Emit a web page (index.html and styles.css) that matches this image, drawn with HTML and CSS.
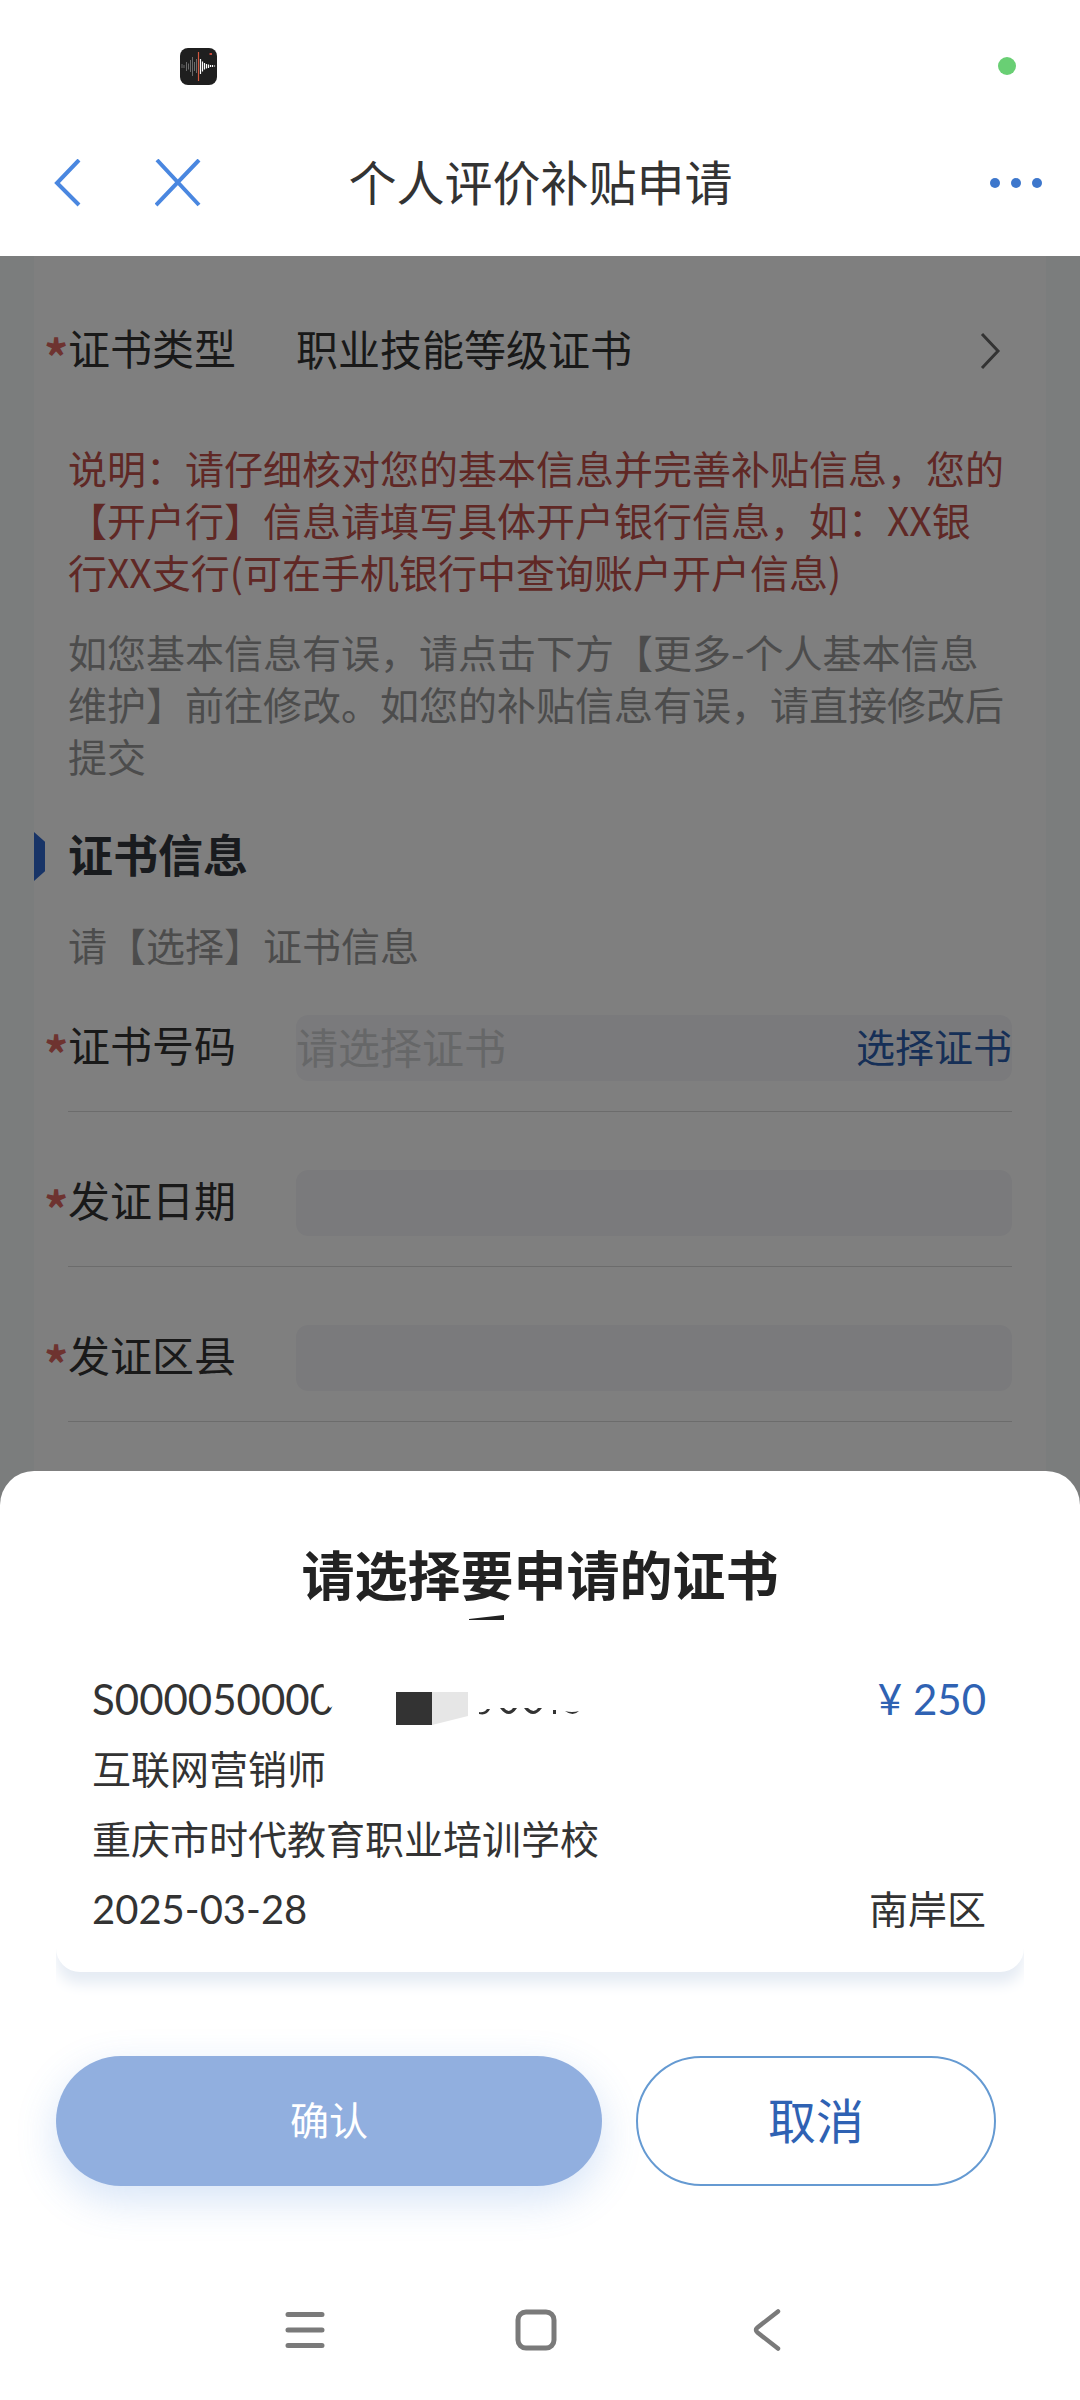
FILE: index.html
```html
<!DOCTYPE html>
<html lang="zh-CN">
<head>
<meta charset="utf-8">
<meta name="viewport" content="width=device-width, initial-scale=1">
<title>个人评价补贴申请</title>
<link rel="stylesheet" href="styles.css">
</head>
<body>
<div class="screen">
  <div class="status-bar">
    <svg class="app-badge" viewBox="0 0 37 37" aria-hidden="true">
      <rect width="37" height="37" rx="8" fill="#1f1f1f"/>
      <g stroke="#6a6a6a" stroke-width="1"><path d="M2 16v4M4 17v3M6.500 14v9M8.500 15.500v6M10.500 12v12M12.500 9v19M14.500 14v9M16.500 11v14"/></g>
      <path d="M18.500 4v29" stroke="#d2583f" stroke-width="1.200"/>
      <path d="M20.500 11v15M22.500 13.500v10M24.500 15v6.500M26.500 16v4.500M28.500 16.500v3.500M30.500 17v2M32.500 17v2M34.500 17.500v1" stroke="#fff" stroke-width="1.200"/>
      <rect x="29.500" y="5" width="2.500" height="2" fill="#c4473c"/>
    </svg>
    <span class="privacy-dot"></span>
  </div>

  <header class="nav-bar">
    <div class="nav-actions">
      <button class="icon-button" type="button" aria-label="返回">
        <svg width="28" height="48" viewBox="0 0 28 48"><path d="M25 1 3 24l22 22" fill="none" stroke="#4a87e0" stroke-width="4"/></svg>
      </button>
      <button class="icon-button" type="button" aria-label="关闭">
        <svg width="46" height="48" viewBox="0 0 46 48"><path d="M2 1l42 45M44 1 1 46" fill="none" stroke="#4a87e0" stroke-width="4"/></svg>
      </button>
    </div>
    <h1 class="nav-title">个人评价补贴申请</h1>
    <button class="icon-button nav-more" type="button" aria-label="更多">
      <svg width="54" height="12" viewBox="0 0 54 12" fill="#3d77cc"><circle cx="6" cy="6" r="5"/><circle cx="27" cy="6" r="5"/><circle cx="48" cy="6" r="5"/></svg>
    </button>
  </header>

  <main class="stage">
    <form class="page">
      <div class="panel">
        <div class="row row-type">
          <span class="label"><span class="star">*</span>证书类型</span>
          <span class="value">职业技能等级证书</span>
          <svg width="22" height="38" viewBox="0 0 22 38" aria-hidden="true"><path d="M2 2l16 17L2 36" fill="none" stroke="#666" stroke-width="3"/></svg>
        </div>
        <p class="note note-alert">说明：请仔细核对您的基本信息并完善补贴信息，您的【开户行】信息请填写具体开户银行信息，如：XX银行XX支行(可在手机银行中查询账户开户信息)</p>
        <p class="note">如您基本信息有误，请点击下方【更多-个人基本信息维护】前往修改。如您的补贴信息有误，请直接修改后提交</p>
        <h2 class="section-title">证书信息</h2>
        <p class="hint">请【选择】证书信息</p>
        <div class="fields">
          <div class="row row-line">
            <label class="label" for="cert-no"><span class="star">*</span>证书号码</label>
            <div class="field"><input id="cert-no" type="text" placeholder="请选择证书" readonly><a class="pick" href="#sheet">选择证书</a></div>
          </div>
          <div class="row row-line">
            <label class="label" for="cert-date"><span class="star">*</span>发证日期</label>
            <div class="field"><input id="cert-date" type="text" readonly></div>
          </div>
          <div class="row row-line">
            <label class="label" for="cert-area"><span class="star">*</span>发证区县</label>
            <div class="field"><input id="cert-area" type="text" readonly></div>
          </div>
        </div>
      </div>
    </form>

    <div class="overlay">
      <section class="sheet" id="sheet">
        <h2 class="sheet-title">请选择要申请的证书
          <svg class="stroke-mark" viewBox="0 0 36 5" aria-hidden="true"><path d="M0 5v-1L35 0v5z" fill="#222"/></svg>
        </h2>
        <div class="cert-list">
          <article class="cert">
            <div class="cert-row">
              <span class="number">S000050000
                <svg class="redaction" viewBox="0 0 300 50" aria-hidden="true">
                  <path d="M33 0l1 8q-1 14 6 20l6-4 0 26h30V0z" fill="#fff"/>
                  <rect x="106" y="12" width="36" height="33" fill="#333"/>
                  <path d="M142 12h36v24l-36 9z" fill="#e6e6e6"/>
                  <path d="M189 32q5 1 8-3h3q-3 7-11 5zM210 28h4q5 6 9 0h4q-8 12-17 0zM234 28h4q6 6 10 0h4q-9 12-18 0zM263 30h3v4h-3zM275 31q7 2 14 0-6 6-14 0z" fill="#333"/>
                </svg>
              </span>
              <span class="price">¥ 250</span>
            </div>
            <div class="cert-row">互联网营销师</div>
            <div class="cert-row">重庆市时代教育职业培训学校</div>
            <div class="cert-row"><time class="date" datetime="2025-03-28">2025-03-28</time><span>南岸区</span></div>
          </article>
        </div>
        <div class="actions">
          <button class="button button-confirm" type="button">确认</button>
          <button class="button button-cancel" type="button">取消</button>
        </div>
      </section>
    </div>
  </main>

  <nav class="system-bar">
    <button class="icon-button" type="button" aria-label="最近任务">
      <svg width="42" height="42" viewBox="0 0 42 42"><path d="M4 5.500h34M4 21h34M4 36.500h34" stroke="#7a7a7a" stroke-width="5" stroke-linecap="round"/></svg>
    </button>
    <button class="icon-button" type="button" aria-label="主屏幕">
      <svg width="42" height="42" viewBox="0 0 42 42"><rect x="3" y="3" width="36" height="36" rx="8" fill="none" stroke="#7a7a7a" stroke-width="5"/></svg>
    </button>
    <button class="icon-button" type="button" aria-label="返回上一级">
      <svg width="42" height="42" viewBox="0 0 42 42"><path d="M32 2.500 11.500 18.500q-3 2.500 0 5L32 39.500" fill="none" stroke="#7a7a7a" stroke-width="4.500" stroke-linecap="round"/></svg>
    </button>
  </nav>
</div>
</body>
</html>
```
FILE: styles.css
```css
* {
  box-sizing: border-box;
}

body {
  margin: 0;
  background: #fff;
  color: #333;
  font-family: "Noto Sans CJK SC", sans-serif;
  font-size: 39px;
  line-height: 52px;
}

h1, h2, p {
  margin: 0;
}

button, input {
  font: inherit;
  color: inherit;
  padding: 0;
  border: 0;
  background: none;
}

svg {
  display: block;
}

.screen {
  display: flex;
  flex-direction: column;
  min-height: 100vh;
}

/* Top bars */
.status-bar {
  display: flex;
  align-items: center;
  justify-content: space-between;
  height: 110px;
  padding: 22px 64px 0 180px;
}

.app-badge {
  width: 37px;
  height: 37px;
}

.privacy-dot {
  width: 18px;
  height: 18px;
  border-radius: 50%;
  background: #69cf74;
}

.nav-bar {
  display: grid;
  grid-template-columns: 1fr auto 1fr;
  align-items: center;
  height: 146px;
  padding: 0 37px 0 54px;
}

.nav-actions {
  display: flex;
  gap: 73px;
}

.nav-title {
  padding-bottom: 6px;
  margin-right: 16px;
  font-size: 48px;
  font-weight: 400;
}

.nav-more {
  justify-self: end;
}

/* Form page */
.stage {
  display: grid;
  flex: 1;
}

.page,
.overlay {
  grid-area: 1 / 1;
}

.page {
  padding: 0 34px;
  background: #f6fbfa;
}

.panel {
  height: 100%;
  padding: 18px 34px 60px;
  background: #fff;
}

.row {
  display: flex;
  align-items: center;
  font-size: 42px;
}

.row-type {
  height: 154px;
  padding-right: 10px;
}

.label {
  display: flex;
  width: 252px;
  margin-left: -24px;
  color: #333;
}

.star {
  width: 24px;
  padding-top: 8px;
  color: #dc6660;
  font-size: 48px;
  font-weight: 700;
}

.value {
  flex: 1;
  padding-bottom: 6px;
}

.note {
  padding-right: 4px;
  margin-top: 28px;
  color: #999;
}

.note-alert {
  margin-top: 13px;
  color: #c0504a;
}

.section-title {
  position: relative;
  margin-top: 47px;
  font-size: 45px;
  color: #33363c;
}

.section-title::before {
  content: "";
  position: absolute;
  left: -34px;
  top: 4px;
  width: 11px;
  height: 49px;
  background: #3069cf;
  clip-path: polygon(0 0, 100% 20%, 100% 80%, 0 100%);
}

.hint {
  margin-top: 38px;
  color: #999;
}

.fields {
  display: grid;
  gap: 58px;
  margin-top: 45px;
}

.row-line {
  padding-bottom: 30px;
  border-bottom: 1px solid #d8d8d8;
}

.field {
  display: flex;
  flex: 1;
  align-items: center;
  height: 66px;
  border-radius: 12px;
  background: #f5f5f8;
}

.field input {
  flex: 1;
  min-width: 0;
  height: 66px;
  padding-bottom: 6px;
}

.field input::placeholder {
  color: #cdced1;
  opacity: 1;
}

.pick {
  padding-bottom: 6px;
  color: #2d5fae;
  font-size: 39px;
  text-decoration: none;
}

/* Bottom sheet */
.overlay {
  z-index: 1;
  display: flex;
  flex-direction: column;
  justify-content: flex-end;
  background: rgba(0, 0, 0, 0.5);
}

.sheet {
  padding: 65px 56px 74px;
  border-radius: 34px 34px 0 0;
  background: #fff;
}

.sheet-title {
  position: relative;
  color: #222;
  font-size: 53px;
  line-height: 74px;
  text-align: center;
}

.stroke-mark {
  position: absolute;
  left: calc(50% - 71px);
  bottom: -10px;
  width: 36px;
  height: 5px;
}

.cert-list {
  margin-top: 54px;
  padding-bottom: 28px;
  overflow: hidden;
}

.cert {
  padding: 0 38px 28px 36px;
  border-radius: 0 0 24px 24px;
  background: #fff;
  box-shadow: 0 12px 14px #e6ecf4;
}

.cert-row {
  display: flex;
  justify-content: space-between;
  height: 70px;
  line-height: 66px;
}

.number,
.price,
.date {
  font-family: Lato, "Noto Sans CJK SC", sans-serif;
  font-size: 42px;
  line-height: 70px;
}

.number {
  position: relative;
}

.redaction {
  position: absolute;
  left: 198px;
  top: 16px;
  width: 300px;
  height: 50px;
}

.date {
  font-size: 40px;
}

.price {
  color: #2f62b3;
}

.actions {
  display: grid;
  grid-template-columns: 546fr 360fr;
  gap: 34px;
  margin-top: 56px;
  padding-right: 28px;
}

.button {
  height: 130px;
  padding-bottom: 6px;
  border-radius: 65px;
}

.button-confirm {
  background: #91afdf;
  color: #fff;
  box-shadow: 0 14px 40px rgba(70, 130, 220, 0.22);
}

.button-cancel {
  border: 2px solid #659ad2;
  color: #2f62b3;
  font-size: 48px;
}

/* System navigation */
.system-bar {
  display: flex;
  align-items: center;
  justify-content: center;
  gap: 189px;
  height: 140px;
  padding-right: 8px;
}
```
